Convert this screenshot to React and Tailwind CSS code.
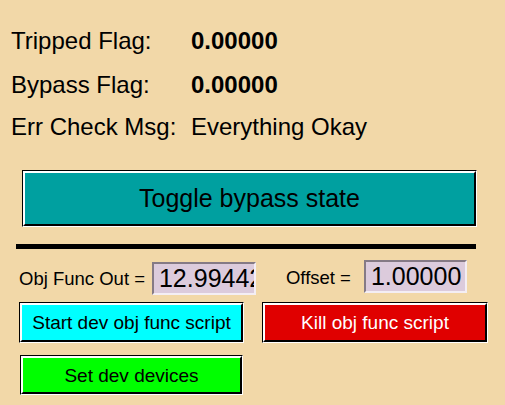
import React from 'react'

const FONT = { fontFamily: '"Liberation Sans", Arial, sans-serif' }

// MEDM-style raised button: black/white outer edge, white/black inner bevel
function BevelButton({ className, fill, textClass, children }) {
  return (
    <div className={`border border-t-black border-l-black border-b-white border-r-white ${className}`}>
      <div className={`h-full w-full border-t-2 border-l-2 border-b-2 border-r-2 border-t-white border-l-white border-b-black border-r-black flex items-center justify-center ${fill}`}>
        <span className={`whitespace-nowrap leading-none ${textClass}`}>{children}</span>
      </div>
    </div>
  )
}

function ValueBox({ className, value }) {
  return (
    <div className={`border-2 border-t-[#857a85] border-l-[#857a85] border-b-[#f4eef4] border-r-[#f4eef4] bg-[#dccbdc] overflow-hidden flex items-center ${className}`}>
      <div className="pl-[5px] text-[25px] leading-[25px] text-black whitespace-nowrap">{value}</div>
    </div>
  )
}

export default function App() {
  const rows = [
    { label: 'Tripped Flag:', value: '0.00000', bold: true },
    { label: 'Bypass Flag:', value: '0.00000', bold: true },
    { label: 'Err Check Msg:', value: 'Everything Okay', bold: false },
  ]

  return (
    <div className="w-[505px] h-[405px] bg-[#f2d8a8] overflow-hidden text-black" style={FONT}>
      <div className="pt-[29px] flex flex-col">
        {rows.map((r, i) => (
          <div key={r.label} className={`flex pl-[11px] text-[24px] leading-[24px] ${i === 1 ? 'mt-[20px]' : i === 2 ? 'mt-[18px]' : ''}`}>
            <span className="w-[180px] shrink-0">{r.label}</span>
            <span className={r.bold ? 'font-bold' : ''}>{r.value}</span>
          </div>
        ))}

        <BevelButton
          className="mt-[31px] ml-[22px] w-[455px] h-[57px]"
          fill="bg-[#00a0a0]"
          textClass="text-[25px] text-black"
        >
          Toggle bypass state
        </BevelButton>

        <div className="mt-[17px] ml-[16px] w-[460px] h-[5px] bg-black" />

        <div className="mt-[11px] flex items-start h-[35px]">
          <span className="ml-[19px] mt-[9px] text-[18.5px] leading-[19px] whitespace-nowrap">Obj Func Out =</span>
          <ValueBox className="ml-[7px] mt-[2px] w-[104px] h-[33px]" value="12.99442" />
          <span className="ml-[30px] mt-[8px] text-[18.5px] leading-[19px] whitespace-nowrap">Offset =</span>
          <ValueBox className="ml-[13px] w-[103px] h-[33px]" value="1.00000" />
        </div>

        <div className="mt-[7px] flex">
          <BevelButton className="ml-[19px] w-[225px] h-[41px]" fill="bg-[#00ffff]" textClass="text-[19px] text-black">
            Start dev obj func script
          </BevelButton>
          <BevelButton className="ml-[18px] w-[226px] h-[41px]" fill="bg-[#e00000]" textClass="text-[19px] text-white">
            Kill obj func script
          </BevelButton>
        </div>

        <BevelButton className="mt-[12px] ml-[20px] w-[223px] h-[40px]" fill="bg-[#00ff00]" textClass="text-[19px] text-black">
          Set dev devices
        </BevelButton>
      </div>
    </div>
  )
}
